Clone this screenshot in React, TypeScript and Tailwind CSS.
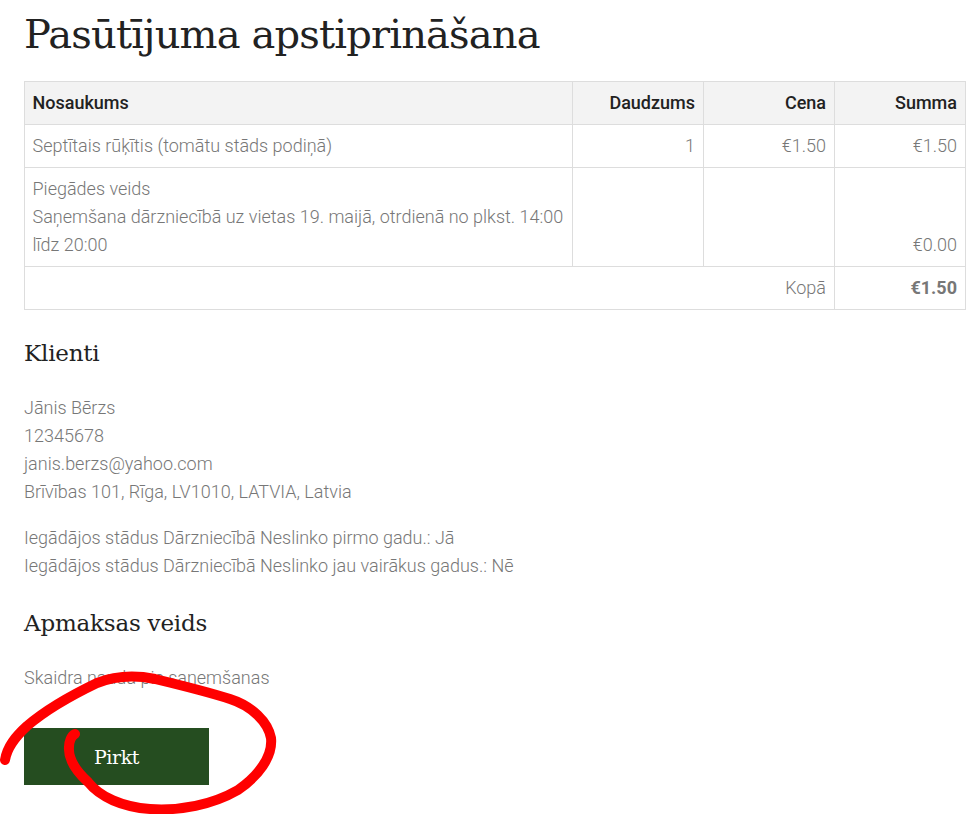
const cell = "border border-[#dddddd] px-2 py-[7px] align-top";
const first = "border border-[#dddddd] pl-[7.5px] pr-2 py-[7px] align-top";
const heading = "font-['DejaVu_Serif',serif] text-[23px] leading-[30px] font-normal tracking-[-0.2px] text-[#222222]";

export default function App() {
  return (
    <div className="relative h-[814px] w-[972px] overflow-hidden bg-white pl-6 font-['Roboto',sans-serif] text-[18px] leading-[28px] font-light text-[#777777]">
      <h1 className="h-[81px] pt-[9px] font-['DejaVu_Serif',serif] text-[40px] leading-[50px] font-normal tracking-[-0.84px] text-[#222222]">
        Pasūtījuma apstiprināšana
      </h1>

      <table className="w-[941px] table-fixed border-collapse">
        <colgroup>
          <col className="w-[548px]" />
          <col className="w-[131px]" />
          <col className="w-[131px]" />
          <col className="w-[131px]" />
        </colgroup>
        <thead>
          <tr className="bg-[#f3f3f3] font-medium text-[#222222]">
            <td className={first}>Nosaukums</td>
            <td className={`${cell} text-right`}>Daudzums</td>
            <td className={`${cell} text-right`}>Cena</td>
            <td className={`${cell} text-right`}>Summa</td>
          </tr>
        </thead>
        <tbody>
          <tr>
            <td className={first}>Septītais rūķītis (tomātu stāds podiņā)</td>
            <td className={`${cell} text-right`}>1</td>
            <td className={`${cell} text-right`}>€1.50</td>
            <td className={`${cell} text-right`}>€1.50</td>
          </tr>
          <tr>
            <td className={first}>
              Piegādes veids
              <br />
              Saņemšana dārzniecībā uz vietas 19. maijā, otrdienā no plkst. 14:00 līdz 20:00
            </td>
            <td className={cell}></td>
            <td className={cell}></td>
            <td className={`${cell} !align-bottom text-right`}>€0.00</td>
          </tr>
          <tr>
            <td colSpan={3} className={`${cell} text-right`}>Kopā</td>
            <td className={`${cell} text-right font-bold`}>€1.50</td>
          </tr>
        </tbody>
      </table>

      <h2 className={`mt-[28px] ${heading}`}>Klienti</h2>
      <p className="mt-[26px]">
        Jānis Bērzs
        <br />
        12345678
        <br />
        janis.berzs@yahoo.com
        <br />
        Brīvības 101, Rīga, LV1010, LATVIA, Latvia
      </p>
      <p className="mt-[18px]">
        Iegādājos stādus Dārzniecībā Neslinko pirmo gadu.: Jā
        <br />
        Iegādājos stādus Dārzniecībā Neslinko jau vairākus gadus.: Nē
      </p>

      <h2 className={`mt-[28px] ${heading}`}>Apmaksas veids</h2>
      <p className="mt-[26px]">Skaidra nauda pie saņemšanas</p>

      <button className="mt-[36px] h-[57px] w-[185px] bg-[#254d20] font-['DejaVu_Serif',serif] text-[19px] font-normal tracking-[-0.4px] text-white">
        Pirkt
      </button>

      {/* marker scribble over the button */}
      <svg className="pointer-events-none absolute top-0 left-0" width="972" height="814" viewBox="0 0 972 814" fill="none">
        <path
          d="M5 760C7 747 15 737 27 726C48 708 72 695 97 683C115 676 135 675 155 679C180 685 205 691 230 699C252 706 268 722 271 738C273 757 258 776 238 790C212 805 180 811 150 809C122 807 100 797 88 782C76 771 68 759 69 747C69 742 71 736 75 734"
          stroke="#ff0000"
          strokeWidth="10"
          strokeLinecap="round"
          strokeLinejoin="round"
        />
      </svg>
    </div>
  );
}
